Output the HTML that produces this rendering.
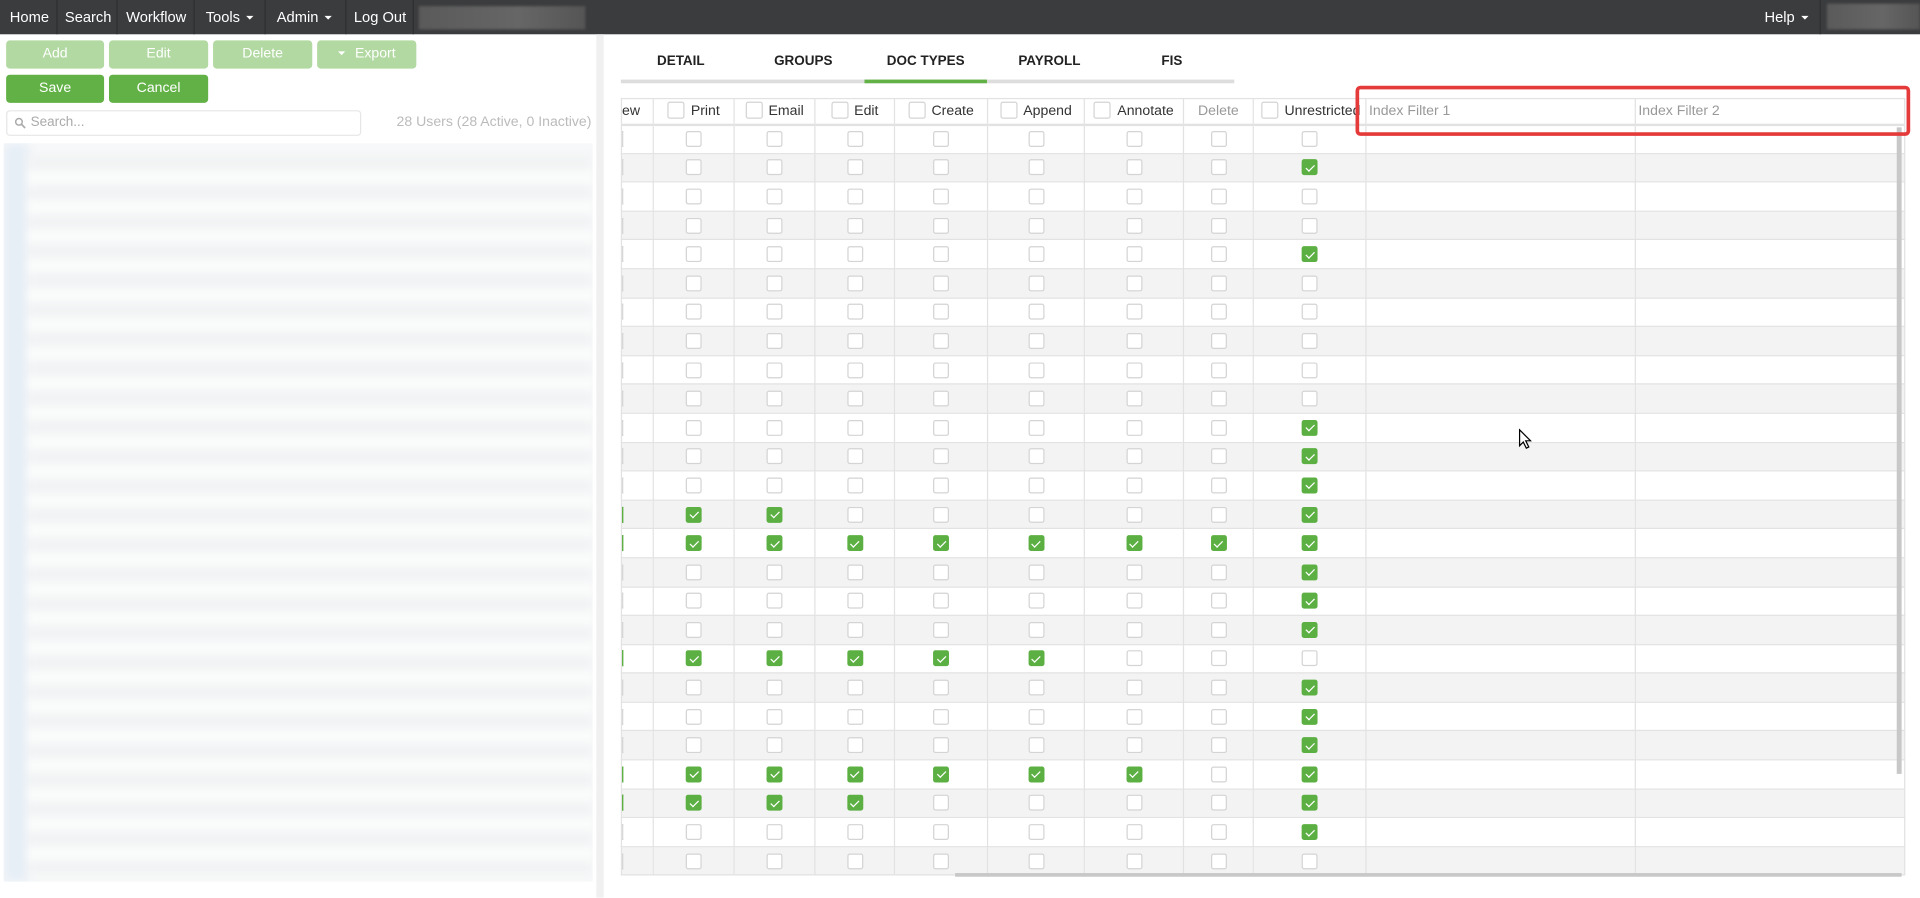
<!DOCTYPE html>
<html><head><meta charset="utf-8"><style>
*{box-sizing:border-box;margin:0;padding:0}
html,body{width:1920px;height:898px;overflow:hidden;background:#fff;font-family:"Liberation Sans",sans-serif}
#w{position:absolute;left:0;top:0;width:1568px;height:733px;transform:scale(1.22449);transform-origin:0 0;background:#fff}
.top{position:absolute;left:0;top:0;width:1568px;height:28px;background:#3b3c3e;color:#fff;font-size:12px}
.top span{position:absolute;top:7px}
.sep{position:absolute;top:0;width:1px;height:28px;background:#2e2f31}
.car{display:inline-block;border-left:3px solid transparent;border-right:3px solid transparent;border-top:3px solid #fff;vertical-align:middle;margin-left:5px}
.blur{position:absolute;background:linear-gradient(90deg,#5a5a5a,#666 60%,#555);filter:blur(1px)}
.btn{position:absolute;height:23px;border-radius:3px;color:#fff;font-size:11.5px;text-align:center;line-height:23px}
.l{background:#b1d9a1}.d{background:#62b146}
.search{position:absolute;left:5px;top:90px;width:290px;height:21px;border:1px solid #e6e6e6;border-radius:3px;font-size:11px;color:#aaa;line-height:19px;padding-left:19px}
.tab{position:absolute;top:44px;font-size:11px;font-weight:bold;color:#222;transform:translateX(-50%)}
table{position:absolute;left:507px;top:80px;border-collapse:collapse;table-layout:fixed;width:1048px;font-size:11.5px;color:#333}
td,th{border:1px solid #e2e2e2;height:23.6px;text-align:center;padding:0;font-weight:normal;overflow:hidden;white-space:nowrap}
th{height:21px;border-bottom:2px solid #e2e2e2}
tbody tr:nth-child(even) td{background:#f3f3f3}
i{display:inline-block;width:13px;height:13px;border:1px solid #d4d4d4;border-radius:2px;background:#fff;vertical-align:middle;position:relative}
th i{width:14px;height:14px;margin-right:5px;top:-1px}
i.c{background:#5cb043;border-color:#5cb043}
i.c:after{content:"";position:absolute;left:3.5px;top:1.5px;width:3px;height:6px;border:solid #fff;border-width:0 1.5px 1.5px 0;transform:rotate(45deg)}
td.e{text-align:left;padding-left:0}
td.e b{display:inline-block;width:1px;height:13px;border:1px solid #d4d4d4;border-left:0;vertical-align:middle}
td.e b.c{background:#5cb043;border-color:#5cb043}
</style></head><body><div id="w">
<div class="top">
<span style="left:8px">Home</span><div class="sep" style="left:46px"></div>
<span style="left:53px">Search</span><div class="sep" style="left:95px"></div>
<span style="left:103px">Workflow</span><div class="sep" style="left:158px"></div>
<span style="left:168px">Tools<b class="car"></b></span><div class="sep" style="left:216px"></div>
<span style="left:226px">Admin<b class="car"></b></span><div class="sep" style="left:282px"></div>
<span style="left:289px">Log Out</span><div class="sep" style="left:337px"></div>
<div class="blur" style="left:342px;top:5px;width:136px;height:19px"></div>
<span style="left:1441px">Help<b class="car"></b></span><div class="sep" style="left:1486px"></div>
<div class="blur" style="left:1492px;top:3px;width:76px;height:21px"></div>
</div>
<div class="btn l" style="left:5px;top:33px;width:80px">Add</div>
<div class="btn l" style="left:89px;top:33px;width:81px">Edit</div>
<div class="btn l" style="left:174px;top:33px;width:81px">Delete</div>
<div class="btn l" style="left:259px;top:33px;width:81px"><b class="car" style="margin:0 8px 0 0"></b>Export</div>
<div class="btn d" style="left:5px;top:61px;width:80px">Save</div>
<div class="btn d" style="left:89px;top:61px;width:81px">Cancel</div>
<div class="search"><svg style="position:absolute;left:6px;top:5px" width="9" height="9" viewBox="0 0 9 9"><circle cx="3.5" cy="3.5" r="2.7" fill="none" stroke="#aaa" stroke-width="1.2"/><path d="M5.5 5.5L8.5 8.5" stroke="#aaa" stroke-width="1.4"/></svg>Search...</div>
<div style="position:absolute;right:1085px;top:94px;font-size:11.5px;color:#bbb">28 Users (28 Active, 0 Inactive)</div>
<div style="position:absolute;left:3px;top:117px;width:481px;height:603px;background:#f7f8f9;overflow:hidden">
<div style="position:absolute;left:0;top:0;width:20px;height:603px;background:#e6eef6;filter:blur(4px)"></div>
<div style="position:absolute;left:20px;top:10px;width:460px;height:590px;background:repeating-linear-gradient(180deg,#f1f3f4 0,#f1f3f4 12px,#fafbfb 12px,#fafbfb 24px);filter:blur(3px)"></div>
</div>
<div style="position:absolute;left:487px;top:28px;width:6px;height:705px;background:#f0f0f0"></div>
<div class="tab" style="left:556px">DETAIL</div>
<div class="tab" style="left:656px">GROUPS</div>
<div class="tab" style="left:756px">DOC TYPES</div>
<div class="tab" style="left:857px">PAYROLL</div>
<div class="tab" style="left:957px">FIS</div>
<div style="position:absolute;left:507px;top:65px;width:501px;height:3px;background:#ddd"></div>
<div style="position:absolute;left:706px;top:65px;width:100px;height:3px;background:#62b146"></div>
<table>
<colgroup><col style="width:26px"><col style="width:66px"><col style="width:66px"><col style="width:65px"><col style="width:76px"><col style="width:79px"><col style="width:81px"><col style="width:57px"><col style="width:92px"><col style="width:220px"><col style="width:220px"></colgroup>
<thead><tr><th style="text-align:left">ew</th><th><i></i>Print</th><th><i></i>Email</th><th><i></i>Edit</th><th><i></i>Create</th><th><i></i>Append</th><th><i></i>Annotate</th><th style="color:#999">Delete</th><th style="text-align:left;padding-left:6px"><i></i>Unrestricted</th><th style="text-align:left;color:#999;padding-left:2px">Index Filter 1</th><th style="text-align:left;color:#999;padding-left:2px">Index Filter 2</th></tr></thead>
<tbody>
<tr><td class="e"><b></b></td><td><i></i></td><td><i></i></td><td><i></i></td><td><i></i></td><td><i></i></td><td><i></i></td><td><i></i></td><td><i></i></td><td></td><td></td></tr>
<tr><td class="e"><b></b></td><td><i></i></td><td><i></i></td><td><i></i></td><td><i></i></td><td><i></i></td><td><i></i></td><td><i></i></td><td><i class="c"></i></td><td></td><td></td></tr>
<tr><td class="e"><b></b></td><td><i></i></td><td><i></i></td><td><i></i></td><td><i></i></td><td><i></i></td><td><i></i></td><td><i></i></td><td><i></i></td><td></td><td></td></tr>
<tr><td class="e"><b></b></td><td><i></i></td><td><i></i></td><td><i></i></td><td><i></i></td><td><i></i></td><td><i></i></td><td><i></i></td><td><i></i></td><td></td><td></td></tr>
<tr><td class="e"><b></b></td><td><i></i></td><td><i></i></td><td><i></i></td><td><i></i></td><td><i></i></td><td><i></i></td><td><i></i></td><td><i class="c"></i></td><td></td><td></td></tr>
<tr><td class="e"><b></b></td><td><i></i></td><td><i></i></td><td><i></i></td><td><i></i></td><td><i></i></td><td><i></i></td><td><i></i></td><td><i></i></td><td></td><td></td></tr>
<tr><td class="e"><b></b></td><td><i></i></td><td><i></i></td><td><i></i></td><td><i></i></td><td><i></i></td><td><i></i></td><td><i></i></td><td><i></i></td><td></td><td></td></tr>
<tr><td class="e"><b></b></td><td><i></i></td><td><i></i></td><td><i></i></td><td><i></i></td><td><i></i></td><td><i></i></td><td><i></i></td><td><i></i></td><td></td><td></td></tr>
<tr><td class="e"><b></b></td><td><i></i></td><td><i></i></td><td><i></i></td><td><i></i></td><td><i></i></td><td><i></i></td><td><i></i></td><td><i></i></td><td></td><td></td></tr>
<tr><td class="e"><b></b></td><td><i></i></td><td><i></i></td><td><i></i></td><td><i></i></td><td><i></i></td><td><i></i></td><td><i></i></td><td><i></i></td><td></td><td></td></tr>
<tr><td class="e"><b></b></td><td><i></i></td><td><i></i></td><td><i></i></td><td><i></i></td><td><i></i></td><td><i></i></td><td><i></i></td><td><i class="c"></i></td><td></td><td></td></tr>
<tr><td class="e"><b></b></td><td><i></i></td><td><i></i></td><td><i></i></td><td><i></i></td><td><i></i></td><td><i></i></td><td><i></i></td><td><i class="c"></i></td><td></td><td></td></tr>
<tr><td class="e"><b></b></td><td><i></i></td><td><i></i></td><td><i></i></td><td><i></i></td><td><i></i></td><td><i></i></td><td><i></i></td><td><i class="c"></i></td><td></td><td></td></tr>
<tr><td class="e"><b class="c"></b></td><td><i class="c"></i></td><td><i class="c"></i></td><td><i></i></td><td><i></i></td><td><i></i></td><td><i></i></td><td><i></i></td><td><i class="c"></i></td><td></td><td></td></tr>
<tr><td class="e"><b class="c"></b></td><td><i class="c"></i></td><td><i class="c"></i></td><td><i class="c"></i></td><td><i class="c"></i></td><td><i class="c"></i></td><td><i class="c"></i></td><td><i class="c"></i></td><td><i class="c"></i></td><td></td><td></td></tr>
<tr><td class="e"><b></b></td><td><i></i></td><td><i></i></td><td><i></i></td><td><i></i></td><td><i></i></td><td><i></i></td><td><i></i></td><td><i class="c"></i></td><td></td><td></td></tr>
<tr><td class="e"><b></b></td><td><i></i></td><td><i></i></td><td><i></i></td><td><i></i></td><td><i></i></td><td><i></i></td><td><i></i></td><td><i class="c"></i></td><td></td><td></td></tr>
<tr><td class="e"><b></b></td><td><i></i></td><td><i></i></td><td><i></i></td><td><i></i></td><td><i></i></td><td><i></i></td><td><i></i></td><td><i class="c"></i></td><td></td><td></td></tr>
<tr><td class="e"><b class="c"></b></td><td><i class="c"></i></td><td><i class="c"></i></td><td><i class="c"></i></td><td><i class="c"></i></td><td><i class="c"></i></td><td><i></i></td><td><i></i></td><td><i></i></td><td></td><td></td></tr>
<tr><td class="e"><b></b></td><td><i></i></td><td><i></i></td><td><i></i></td><td><i></i></td><td><i></i></td><td><i></i></td><td><i></i></td><td><i class="c"></i></td><td></td><td></td></tr>
<tr><td class="e"><b></b></td><td><i></i></td><td><i></i></td><td><i></i></td><td><i></i></td><td><i></i></td><td><i></i></td><td><i></i></td><td><i class="c"></i></td><td></td><td></td></tr>
<tr><td class="e"><b></b></td><td><i></i></td><td><i></i></td><td><i></i></td><td><i></i></td><td><i></i></td><td><i></i></td><td><i></i></td><td><i class="c"></i></td><td></td><td></td></tr>
<tr><td class="e"><b class="c"></b></td><td><i class="c"></i></td><td><i class="c"></i></td><td><i class="c"></i></td><td><i class="c"></i></td><td><i class="c"></i></td><td><i class="c"></i></td><td><i></i></td><td><i class="c"></i></td><td></td><td></td></tr>
<tr><td class="e"><b class="c"></b></td><td><i class="c"></i></td><td><i class="c"></i></td><td><i class="c"></i></td><td><i></i></td><td><i></i></td><td><i></i></td><td><i></i></td><td><i class="c"></i></td><td></td><td></td></tr>
<tr><td class="e"><b></b></td><td><i></i></td><td><i></i></td><td><i></i></td><td><i></i></td><td><i></i></td><td><i></i></td><td><i></i></td><td><i class="c"></i></td><td></td><td></td></tr>
<tr><td class="e"><b></b></td><td><i></i></td><td><i></i></td><td><i></i></td><td><i></i></td><td><i></i></td><td><i></i></td><td><i></i></td><td><i></i></td><td></td><td></td></tr>
</tbody></table>
<div style="position:absolute;left:507px;top:717px;width:1061px;height:16px;background:#fff"></div>
<div style="position:absolute;left:780px;top:713px;width:773px;height:3px;background:#c8c8c8"></div>
<div style="position:absolute;left:1549px;top:104px;width:4px;height:528px;background:#c8c8c8"></div>
<div style="position:absolute;left:1107px;top:70px;width:453px;height:41px;border:3px solid #e53a3a;border-radius:4px"></div>
<svg style="position:absolute;left:1240px;top:350px" width="11" height="17" viewBox="0 0 11 17"><path d="M1 1L1 14L4 11L6.5 16L8.5 15L6 10L10 10Z" fill="#fff" stroke="#000" stroke-width="1"/></svg>
</div></body></html>
